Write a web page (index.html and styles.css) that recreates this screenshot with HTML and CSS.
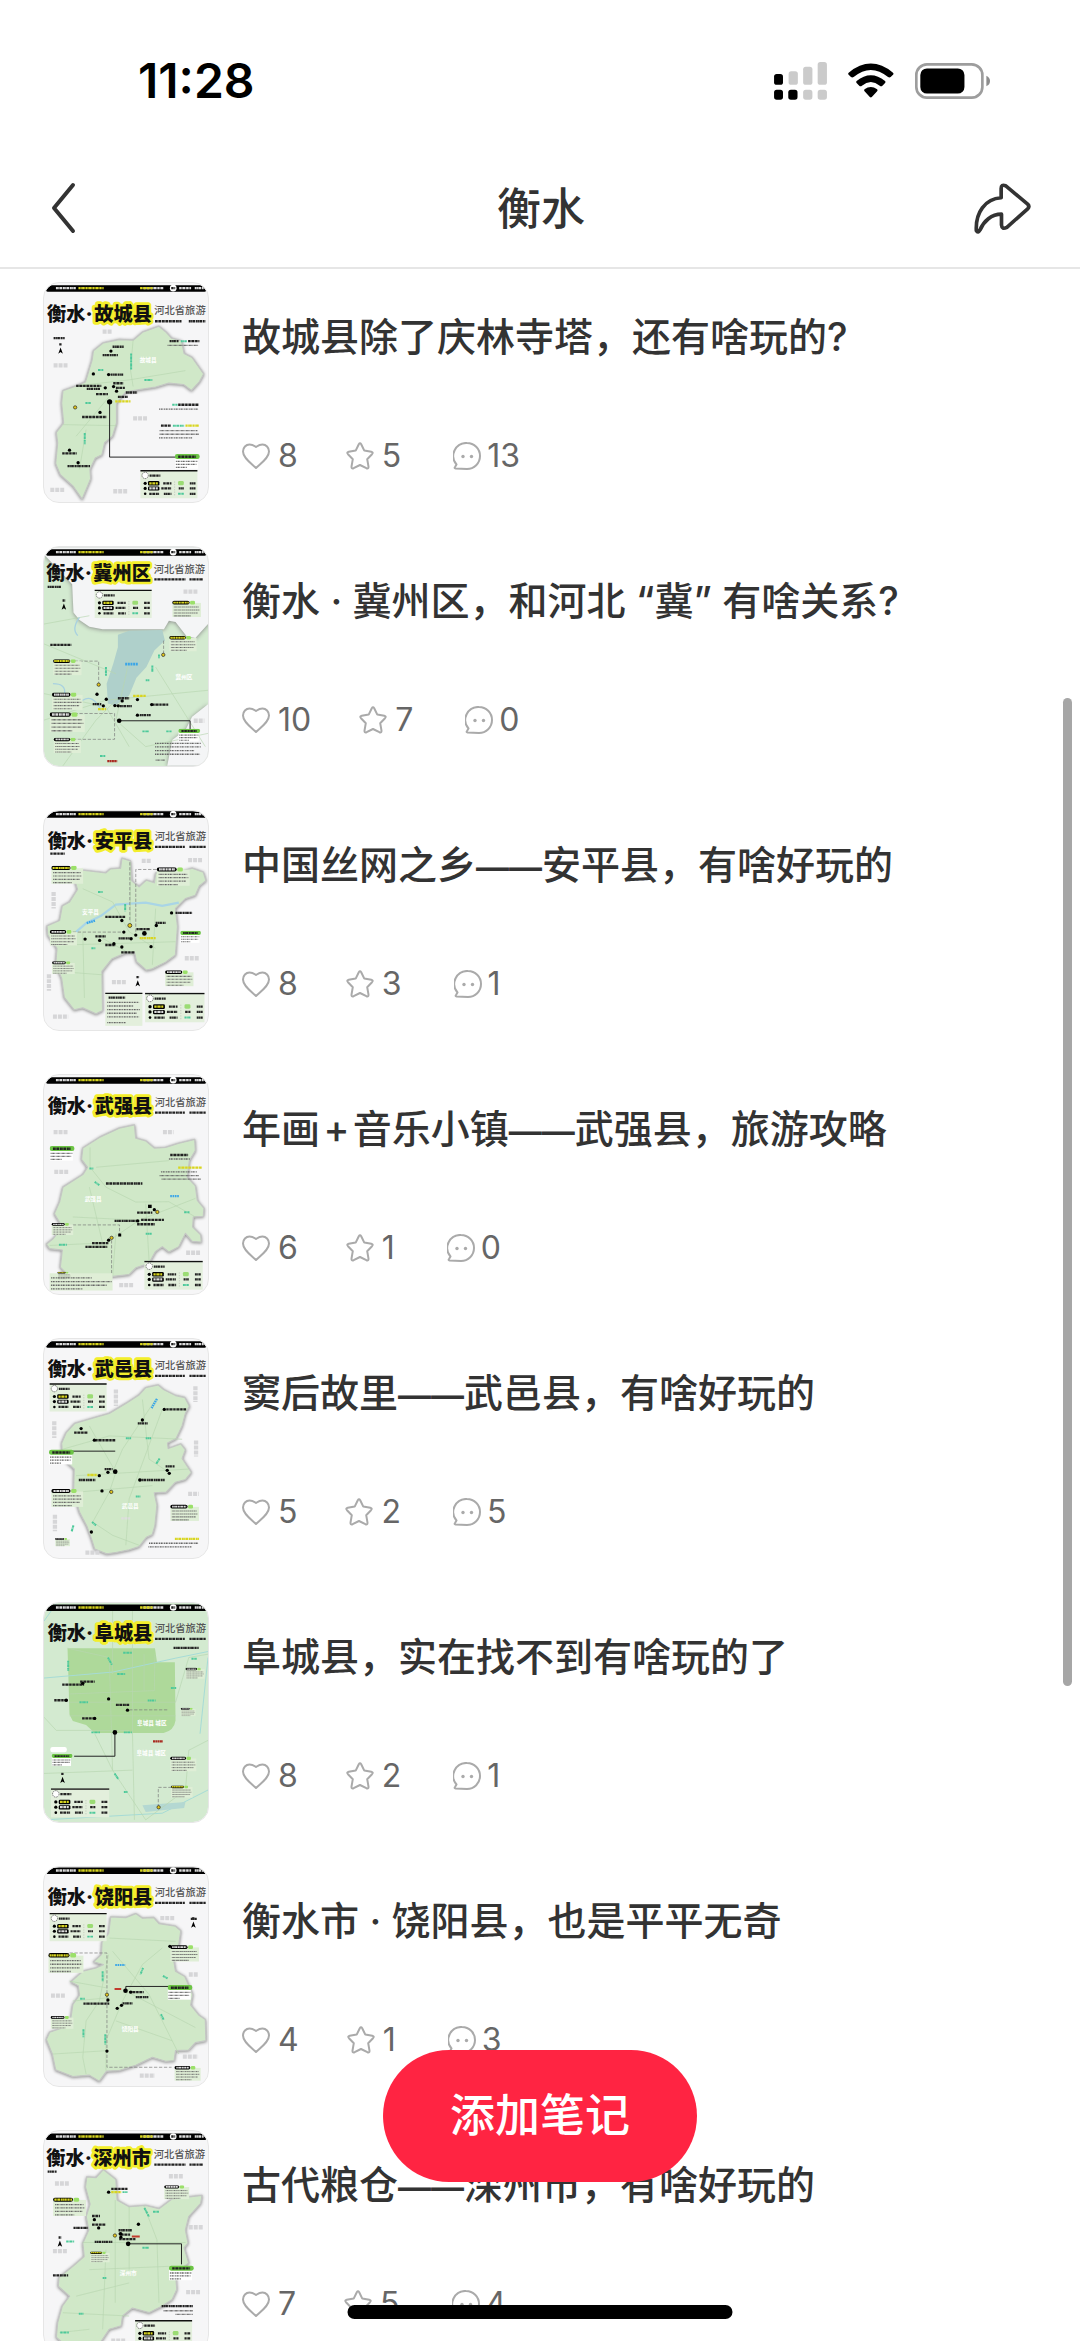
FILE: index.html
```html
<!DOCTYPE html>
<html lang="zh-CN">
<head>
    <meta charset="UTF-8">
    <meta name="viewport" content="width=device-width, initial-scale=1.0">
    <title>衡水</title>
    <link rel="stylesheet" href="styles.css">
</head>
<body>
    <!-- Shared symbols: icons and map pieces -->
    <svg class="sprite" aria-hidden="true">
        <symbol id="heart" viewBox="0 0 28 28">
            <path d="M14 26C9 21 1 16 1 9.500C1 5.500 4 2.500 7.500 2.500C10.500 2.500 12.500 4 14 5C15.500 4 17.500 2.500 20.500 2.500C24 2.500 27 5.500 27 9.500C27 16 19 21 14 26Z"/>
        </symbol>
        <symbol id="star" viewBox="0 0 28 28">
            <path d="M12.800 2.200Q14 .300 15.200 2.200L18.300 8.600L25.300 9.700Q27.700 10.300 26 12.200L21.200 17.200L22.500 24.600Q22.700 27 20.400 26.200L14 23L7.600 26.200Q5.300 27 5.500 24.600L6.800 17.200L2 12.200Q.300 10.300 2.700 9.700L9.700 8.600Z"/>
        </symbol>
        <symbol id="comment" viewBox="0 0 28 28">
            <path d="M14 1A13 13 0 1 1 14 27L2.500 26.500Q1 26.300 2 25L3.500 22.500A13 13 0 0 1 14 1Z"/>
            <circle class="eye" cx="10" cy="14.500" r="1.700"/><circle class="eye" cx="18.500" cy="14.500" r="1.700"/>
        </symbol>

        <symbol id="bar" viewBox="0 0 495 30">
            <rect x="6" y="6" width="484" height="20" rx="5"/>
            <path class="tw" d="M36 15h60M300 15h60M408 15h36M455 15h28"/>
            <path class="ty" d="M104 15h76M290 15h38"/>
            <circle cx="390" cy="15" r="10" fill="#fff"/><path class="tb" d="M384 15h12"/>
        </symbol>
        <symbol id="legend" viewBox="0 0 180 90">
            <rect width="180" height="90" fill="#e3efdc"/>
            <path d="M0 2h180" stroke="#111" stroke-width="5"/>
            <circle cx="15" cy="17" r="10" fill="#fff" stroke="#333" stroke-width="2" stroke-dasharray="4 2"/>
            <path class="tb" d="M29 18h34"/>
            <circle cx="15" cy="42" r="5"/><circle cx="15" cy="58" r="5"/><circle cx="15" cy="75" r="4"/>
            <rect x="24" y="35" width="36" height="14" rx="4"/><rect x="24" y="52" width="36" height="13" rx="4"/>
            <path class="ty" d="M28 42h28"/><path class="tw" d="M28 58h28"/>
            <path class="tb" d="M28 75h32M72 42h26M66 58h32M74 75h24M156 42h18M156 58h18M156 75h18M121 58h16"/>
            <path d="M108 36v46" stroke="#888" stroke-dasharray="4 4"/>
            <rect x="119" y="35" width="18" height="13" rx="4" fill="#9bdc74"/><path class="tg" d="M119 75h18"/>
        </symbol>
        <symbol id="note" viewBox="0 0 110 62">
            <rect y="8" width="106" height="52" fill="#dfeed6"/>
            <rect width="64" height="14" rx="7"/><path class="tw" d="M7 7h52"/>
            <rect x="66" width="18" height="14" rx="5" fill="#9be069"/>
            <path class="ts" d="M6 23h92M6 34h96M6 45h88M6 56h62"/>
        </symbol>
        <symbol id="noteY" viewBox="0 0 110 62">
            <rect y="8" width="106" height="52" fill="#dfeed6"/>
            <rect width="64" height="14" rx="7"/><path class="ty" d="M4 7h57"/>
            <rect x="66" width="18" height="14" rx="5" fill="#9be069"/>
            <path class="ts" d="M6 23h92M6 34h96M6 45h88M6 56h62"/>
        </symbol>
        <symbol id="tag" viewBox="0 0 76 46">
            <rect y="12" width="70" height="32" fill="#fff"/>
            <rect width="75" height="15" rx="7" fill="#6cc445"/><path class="tb" d="M10 8h54"/>
            <path class="ts" d="M3 22h66M3 31h62M3 40h34"/>
        </symbol>
        <symbol id="north" viewBox="0 0 16 34">
            <path class="tb" d="M4 5h8"/><path d="M8 14L15 33L8 28L1 33Z"/>
        </symbol>
    </svg>

    <div class="app">
        <div class="status">
            <span class="time">11:28</span>
            <div class="status-icons">
                <svg class="signal" viewBox="105 63 160 115" aria-hidden="true">
                    <g fill="#cbcbcb">
                        <rect x="149" y="91" width="28" height="41" rx="8"/><rect x="193" y="77" width="28" height="55" rx="8"/><rect x="237" y="63" width="28" height="69" rx="8"/>
                        <rect x="193" y="147" width="28" height="30" rx="8"/><rect x="237" y="147" width="28" height="30" rx="8"/>
                    </g>
                    <rect x="105" y="99" width="27" height="33" rx="8"/><rect x="105" y="147" width="27" height="30" rx="8"/><rect x="148" y="147" width="28" height="30" rx="8"/>
                </svg>
                <svg class="wifi" viewBox="326 67 139 105" aria-hidden="true">
                    <path d="M328 96Q395 41 462 96Q465 99 462 102L455 109Q451 112 447 109Q395 66 343 109Q339 112 335 109L328 102Q325 99 328 96Z"/>
                    <path d="M352 121Q395 86 438 121Q441 124 438 127L430 135Q426 139 422 135Q395 113 368 135Q364 139 360 135L352 127Q349 124 352 121Z"/>
                    <path d="M376 146Q395 132 414 146Q417 149 414 152L398 169Q395 172 392 169L376 152Q373 149 376 146Z"/>
                </svg>
                <svg class="battery" viewBox="525 66 226 108" aria-hidden="true">
                    <rect x="529" y="70" width="199" height="100" rx="32" fill="none" stroke="#9d9d9d" stroke-width="8"/>
                    <rect x="541" y="82" width="133" height="76" rx="20"/>
                    <path d="M740 104Q751 109 751 120T740 136Z" fill="#8d8d8d"/>
                </svg>
            </div>
        </div>

        <header class="nav">
            <button class="nav-btn" type="button" aria-label="返回">
                <svg class="back" viewBox="0 0 26 52"><path d="M23 3L4 26L23 49"/></svg>
            </button>
            <h1>衡水</h1>
            <button class="nav-btn" type="button" aria-label="分享">
                <svg class="share" viewBox="704 426 170 152"><path d="M785 470V442Q785 429 798 434L864 489Q871 496 864 503L802 558Q787 566 786 551V519C756 519 733 540 722 566Q716 577 711 568C708 514 737 473 785 470Z"/></svg>
            </button>
        </header>

        <main class="list">
            <article class="note">
                <svg class="map" viewBox="43 38 495 660" role="img" aria-label="故城县地图">
                    <path class="county" d="M390 168L412 186L428 204L458 212L466 250L490 262L525 312L512 336L488 362L464 344L420 340L380 352L340 358L290 366L262 400L262 460L250 500L226 520L218 556L198 566L182 600L184 628L158 690L130 650L92 616L78 582L84 520L80 488L102 460L96 400L100 362L140 348L168 336L188 270L192 242L222 218L270 208L312 210L340 186Z"/>
                    <path class="road" d="M312 210L304 300L312 350M140 348L300 330L470 302M100 465L262 468M140 500L240 380M170 480L150 600"/>
                    <text class="where" x="332" y="276">故城县</text>
                    <path class="tg" d="M306 250v50M346 330h24M168 400h16M166 490v34M206 300h16"/>
                    <path class="away" d="M220 184h30M72 286h44M312 446h42M62 662h42M252 666h44"/>
                    <path class="leader" d="M241 396V563H440"/>
                    <path class="tb" d="M250 230h34M220 255h46M244 314h38M140 348h76M172 357h40M200 373h36M252 340h30M260 354h28M290 368h34M266 381h30M158 442h74M98 552h44M114 590h68M72 204h34"/>
                    <path class="ty" d="M258 395h46"/>
                    <circle cx="245" cy="243" r="5"/><circle cx="192" cy="312" r="5"/><circle cx="238" cy="314" r="5"/><circle cx="228" cy="354" r="5"/><circle cx="253" cy="350" r="5"/><circle cx="262" cy="364" r="5"/><circle cx="241" cy="396" r="8"/><circle cx="212" cy="428" r="5"/><circle cx="120" cy="542" r="5"/><circle cx="146" cy="580" r="5"/>
                    <circle class="gold" cx="137" cy="413" r="5"/>
                    <use href="#north" x="85" y="218" width="16" height="34"/>
                    <path class="tb" d="M422 213h28M478 213h34M448 405h62M396 468h30"/><path class="tg" d="M456 213h18M430 405h16M432 468h34"/><path class="ty" d="M470 468h40"/>
                    <path class="ts" d="M416 226h92M390 418h118M392 483h114M392 494h118M390 505h100"/>
                    <use href="#tag" x="438" y="554" width="76" height="46"/>
                    <use href="#legend" x="330" y="602" width="180" height="86"/>
                    <use href="#bar" x="43" y="38" width="495" height="30"/>
                    <text class="city" x="52" y="152">衡水<tspan class="dot">·</tspan></text><text class="hot" x="195" y="152">故城县</text><text class="sub" x="376" y="131">河北省旅游</text>
                    <path class="tb" d="M378 153h80M480 153h50"/>
                </svg>
                <div class="note-body">
                    <h2>故城县除了庆林寺塔，还有啥玩的?</h2>
                    <div class="stats">
                        <span class="stat"><svg><use href="#heart"/></svg>8</span>
                        <span class="stat"><svg><use href="#star"/></svg>5</span>
                        <span class="stat"><svg><use href="#comment"/></svg>13</span>
                    </div>
                </div>
            </article>

            <article class="note">
                <svg class="map green" viewBox="43 38 495 660" role="img" aria-label="冀州区地图">
                    <path class="outside" d="M43 38H538V270L500 312L474 308L440 264L420 260L405 286L220 286L180 278L150 258L132 235L128 150L43 60Z"/>
                    <path class="outside" d="M538 512L490 550L470 590L430 620L415 698H538Z"/>
                    <path d="M266 302L300 290L400 288L408 320L376 350L352 400L322 432L300 486L258 516L236 510L232 450L252 390L266 340Z" fill="#afd0cb"/>
                    <path class="road" d="M43 270L180 245M43 330L260 420M43 560L230 500L538 470M100 698L200 560L270 490M260 560L350 640L538 600M300 380L260 560M380 400L530 640M43 480L230 520L300 640"/>
                    <path d="M150 250Q125 285 145 305M70 450Q110 450 105 480T160 500Q190 480 215 530" stroke="#a8d1e0" stroke-width="4" fill="none"/>
                    <text class="where" x="440" y="436">冀州区</text>
                    <path d="M288 391h38" stroke="#3aa5e8" stroke-width="9" stroke-dasharray="6 2"/>
                    <path class="tg" d="M230 400v26M370 395v20M350 440h12M390 362v12M340 594h20M412 594h16M212 668h16"/>
                    <path class="away" d="M464 172h44M495 562h32"/>
                    <path class="dash" d="M135 382H208V455M120 540H256V618H115M404 320V360"/>
                    <path class="leader" d="M270 562H484V588"/>
                    <path class="tb" d="M62 333h64M266 494h34M190 512h26M272 518h36M370 513h48M332 545h34M54 158h40M210 182h46"/>
                    <path class="ty" d="M312 487h38M206 527h24"/><path d="M234 684h30" stroke="#a92a20" stroke-width="7" stroke-dasharray="6 1"/>
                    <circle cx="203" cy="482" r="5"/><circle cx="231" cy="497" r="5"/><circle cx="222" cy="517" r="5"/><circle cx="257" cy="516" r="5"/><circle cx="267" cy="517" r="5"/><circle cx="279" cy="502" r="5"/><circle cx="325" cy="498" r="5"/><circle cx="368" cy="513" r="5"/><circle cx="325" cy="545" r="5"/><circle cx="270" cy="562" r="7"/>
                    <circle class="gold" cx="208" cy="453" r="5"/><circle class="gold" cx="403" cy="363" r="5"/>
                    <use href="#north" x="95" y="194" width="16" height="34"/>
                    <use href="#noteY" x="60" y="376" width="110" height="50"/><use href="#note" x="60" y="477" width="110" height="54"/><use href="#note" x="60" y="536" width="110" height="62"/><use href="#note" x="60" y="613" width="110" height="48"/>
                    <use href="#noteY" x="430" y="198" width="90" height="54"/><use href="#noteY" x="416" y="306" width="96" height="48"/>
                    <use href="#tag" x="444" y="586" width="76" height="40"/>
                    <path class="ts" d="M378 630h140M378 641h140M378 652h120M378 663h136M380 681h30"/>
                    <use href="#legend" x="192" y="166" width="180" height="86"/>
                    <use href="#bar" x="43" y="38" width="495" height="30"/>
                    <text class="city" x="50" y="136">衡水<tspan class="dot">·</tspan></text><text class="hot" x="192" y="136">冀州区</text><text class="sub" x="374" y="115">河北省旅游</text>
                    <path class="tb" d="M376 135h94M482 135h40"/>
                </svg>
                <div class="note-body">
                    <h2>衡水 · 冀州区，和河北 “冀” 有啥关系?</h2>
                    <div class="stats">
                        <span class="stat"><svg><use href="#heart"/></svg>10</span>
                        <span class="stat"><svg><use href="#star"/></svg>7</span>
                        <span class="stat"><svg><use href="#comment"/></svg>0</span>
                    </div>
                </div>
            </article>

            <article class="note">
                <svg class="map" viewBox="43 36 495 660" role="img" aria-label="安平县地图">
                    <path class="county" d="M278 178L304 186L308 246L330 264L352 244L376 252L380 222L440 224L490 208L524 220L532 246L512 262L500 290L470 300L440 330L446 384L440 470L410 492L370 512L352 516L322 490L316 462L290 464L248 482L218 520L220 638L200 648L160 630L134 636L104 598L96 540L78 500L82 450L54 410L52 382L90 366L98 322L120 310L144 272L136 246L160 214L230 222L244 210L274 208Z"/>
                    <path d="M140 400L170 374L215 352L260 318L350 312L400 322L450 312" stroke="#a9d5e6" stroke-width="7" fill="none"/>
                    <path class="road" d="M160 270L250 310L300 400L380 450M304 190V390M100 440L440 430M160 400L165 600M220 420L310 470M380 330L370 500M90 520L220 530"/>
                    <text class="where" x="158" y="347">安平县</text>
                    <path class="tg" d="M206 280h14M288 316v22M186 450h12"/><path d="M172 374l26 -8" stroke="#3aa5e8" stroke-width="7" stroke-dasharray="5 2"/>
                    <path class="away" d="M338 186h30M478 184h44M72 280v50M468 480h44M248 552h44M70 656h46M58 528v50"/>
                    <path class="dash" d="M130 401H284M320 400V212H384M302 190V370"/>
                    <path class="tb" d="M228 355h60M440 343h50M380 373h30M322 392h40M198 414h32M268 420h34M228 440h30M276 462h40M62 164h44"/>
                    <path class="ty" d="M332 419h48"/>
                    <circle cx="278" cy="366" r="5"/><circle cx="428" cy="343" r="5"/><circle cx="382" cy="381" r="5"/><circle cx="167" cy="422" r="5"/><circle cx="211" cy="426" r="5"/><circle cx="254" cy="436" r="5"/><circle cx="278" cy="446" r="5"/><circle cx="284" cy="401" r="5"/><circle cx="320" cy="410" r="5"/><circle cx="346" cy="405" r="7"/><circle cx="366" cy="445" r="5"/><circle cx="306" cy="421" r="5"/>
                    <circle class="gold" cx="302" cy="381" r="6"/>
                    <use href="#noteY" x="60" y="201" width="110" height="56"/><use href="#note" x="60" y="395" width="86" height="48"/><use href="#note" x="60" y="489" width="86" height="40"/>
                    <use href="#note" x="380" y="205" width="110" height="58"/><use href="#note" x="380" y="516" width="146" height="50"/>
                    <use href="#tag" x="448" y="397" width="76" height="38"/>
                    <use href="#north" x="318" y="532" width="16" height="34"/>
                    <rect x="228" y="584" width="112" height="100" fill="#e3efdc"/><path d="M228 586h112" stroke="#111" stroke-width="4"/>
                    <path class="tb" d="M238 599h50"/><path class="ts" d="M234 613h96M234 624h80M234 635h98M234 646h90M234 657h96M234 674h56"/>
                    <use href="#legend" x="348" y="584" width="180" height="90"/>
                    <use href="#bar" x="43" y="30" width="495" height="30"/>
                    <text class="city" x="54" y="146">衡水<tspan class="dot">·</tspan></text><text class="hot" x="196" y="146">安平县</text><text class="sub" x="377" y="124">河北省旅游</text>
                    <path class="tb" d="M378 144h90M482 144h50"/>
                </svg>
                <div class="note-body">
                    <h2>中国丝网之乡<span class="em">——</span>安平县，有啥好玩的</h2>
                    <div class="stats">
                        <span class="stat"><svg><use href="#heart"/></svg>8</span>
                        <span class="stat"><svg><use href="#star"/></svg>3</span>
                        <span class="stat"><svg><use href="#comment"/></svg>1</span>
                    </div>
                </div>
            </article>

            <article class="note">
                <svg class="map" viewBox="43 42 495 660" role="img" aria-label="武强县地图">
                    <path class="county" d="M270 202L316 192L320 232L350 240L376 262L410 260L448 248L498 236L500 270L482 300L476 350L500 376L506 420L526 444L524 468L494 470L492 500L516 524L518 546L490 544L470 520L450 560L420 576L400 560L380 574L360 610L320 624L300 644L230 652L180 664L110 640L92 622L98 570L60 566L50 552L70 536L98 500L74 460L90 424L100 380L160 342L174 320L156 296L160 262L210 230Z"/>
                    <path class="road" d="M182 260V320L230 380L320 425L420 424L500 470M60 556L230 548L330 480L500 414M180 380L220 550M260 520L250 650M350 430L360 600M200 320L420 300M130 470L330 480"/>
                    <text class="where" x="166" y="422">武强县</text>
                    <path class="tg" d="M196 364l14 10M88 554h24M466 456h16M350 521h18M180 324h12"/><path d="M424 407h28" stroke="#3aa5e8" stroke-width="7" stroke-dasharray="5 2"/>
                    <path class="away" d="M72 214h44M402 214h32M74 334h44M472 578h42M270 676h42"/>
                    <path class="dash" d="M130 494H271V522M247 540V650"/>
                    <path class="tb" d="M230 369h110M424 283h54M324 457h46M256 482h70M336 479h70M324 492h54M188 549h50M168 560h66"/>
                    <circle cx="376" cy="448" r="5"/><rect x="357" y="433" width="11" height="10"/><rect x="267" y="520" width="9" height="9"/><circle cx="238" cy="540" r="5"/><circle cx="326" cy="482" r="5"/><circle class="gold" cx="385" cy="455" r="5"/><circle class="gold" cx="247" cy="533" r="5"/>
                    <use href="#tag" x="60" y="252" width="76" height="54"/>
                    <path class="ty" d="M448 321h72"/><path class="ts" d="M396 334h110M392 345h120M398 356h120M420 295h64"/>
                    <use href="#note" x="60" y="488" width="80" height="38"/>
                    <rect x="60" y="640" width="190" height="52" fill="#dfeed6"/><use href="#noteY" x="60" y="635" width="90" height="24"/><path class="ts" d="M64 654h124M64 665h184M64 676h170M64 687h96"/>
                    <use href="#legend" x="344" y="602" width="180" height="88"/>
                    <use href="#bar" x="43" y="42" width="495" height="30"/>
                    <text class="city" x="54" y="156">衡水<tspan class="dot">·</tspan></text><text class="hot" x="196" y="156">武强县</text><text class="sub" x="377" y="136">河北省旅游</text>
                    <path class="tb" d="M378 155h90M482 155h50"/>
                </svg>
                <div class="note-body">
                    <h2>年画&hairsp;+&hairsp;音乐小镇<span class="em">——</span>武强县，旅游攻略</h2>
                    <div class="stats">
                        <span class="stat"><svg><use href="#heart"/></svg>6</span>
                        <span class="stat"><svg><use href="#star"/></svg>1</span>
                        <span class="stat"><svg><use href="#comment"/></svg>0</span>
                    </div>
                </div>
            </article>

            <article class="note">
                <svg class="map" viewBox="43 38 495 660" role="img" aria-label="武邑县地图">
                    <path class="county" d="M388 176L404 190L440 208L468 214L482 240L470 262L460 300L442 338L416 352L418 368L456 354L470 372L460 398L488 440L470 462L440 470L412 500L376 502L384 540L378 600L370 628L352 636L330 664L300 674L260 682L232 686L196 672L186 640L172 602L150 560L132 500L134 430L100 400L96 352L110 320L136 292L190 276L240 262L290 232L330 206L350 184Z"/>
                    <path class="road" d="M180 300L260 440L240 500L190 590M380 220L280 370L250 440M140 450L480 430M140 500L370 480M190 590L250 630L330 660M400 250L300 520L290 660M100 370L240 330L460 340M340 220L360 400L420 440"/>
                    <text class="where" x="278" y="548">武邑县</text><path class="tw" d="M276 579h28"/>
                    <path d="M384 218l-16 28" stroke="#3aa5e8" stroke-width="7" stroke-dasharray="5 2"/>
                    <path class="tg" d="M290 337h16M350 337h16M392 398l-10 16M188 590l12 10M320 513h14M132 600l-6 20"/>
                    <path class="away" d="M260 190v50M500 180v48M74 286v50M502 344v48M478 505h32M76 568v50M168 682h44"/>
                    <path class="leader" d="M130 376H258"/>
                    <path class="tb" d="M412 250h60M326 292h30M134 320h40M198 343h60M226 430h24M148 463h50M332 463h76M410 422h28"/><path class="ty" d="M174 448h30"/>
                    <circle cx="406" cy="250" r="5"/><circle cx="340" cy="282" r="5"/><circle cx="155" cy="308" r="5"/><circle cx="195" cy="343" r="5"/><circle cx="236" cy="440" r="5"/><circle cx="258" cy="438" r="7"/><circle cx="210" cy="450" r="5"/><circle cx="332" cy="463" r="5"/><circle cx="415" cy="434" r="5"/><circle cx="421" cy="443" r="5"/><circle cx="218" cy="496" r="5"/><circle cx="186" cy="620" r="5"/><circle class="gold" cx="246" cy="499" r="5"/>
                    <use href="#tag" x="58" y="369" width="76" height="52"/>
                    <use href="#note" x="60" y="490" width="110" height="56"/><use href="#note" x="60" y="638" width="80" height="26"/>
                    <use href="#note" x="424" y="532" width="90" height="62"/>
                    <path class="ty" d="M438 641h74"/><path class="ts" d="M360 654h150M358 665h130"/>
                    <use href="#legend" x="56" y="171" width="180" height="86"/>
                    <use href="#bar" x="43" y="38" width="495" height="30"/>
                    <text class="city" x="54" y="149">衡水<tspan class="dot">·</tspan></text><text class="hot" x="196" y="149">武邑县</text><text class="sub" x="377" y="129">河北省旅游</text>
                    <path class="tb" d="M378 149h90M482 149h50"/>
                </svg>
                <div class="note-body">
                    <h2>窦后故里<span class="em">——</span>武邑县，有啥好玩的</h2>
                    <div class="stats">
                        <span class="stat"><svg><use href="#heart"/></svg>5</span>
                        <span class="stat"><svg><use href="#star"/></svg>2</span>
                        <span class="stat"><svg><use href="#comment"/></svg>5</span>
                    </div>
                </div>
            </article>

            <article class="note">
                <svg class="map green" viewBox="43 36 495 660" role="img" aria-label="阜城县地图">
                    <path d="M114 172H378L384 214H438L440 390Q436 420 404 428H196L170 404L130 392L120 372Z" fill="#aed99a"/>
                    <path d="M43 262L250 244L440 202L538 182M538 200L514 430M43 690L400 670L538 600M43 90L80 38" stroke="#a5dbd6" stroke-width="3" fill="none"/>
                    <path d="M340 646L470 636L466 654L350 666Z" fill="#b4d8d2"/>
                    <path class="road" d="M114 172L240 200L250 540L350 690M43 380L80 420H300M310 60V428L316 690M120 335H440L480 200L538 190M120 310L376 300L378 190M196 430L250 540M43 550L310 540M345 190V300M120 376H440M538 450L480 480L470 600L350 690M250 250V60"/>
                    <text class="where" x="324" y="403">阜城县 城区</text><text class="where" x="322" y="494">阜城县 城区</text>
                    <path class="tg" d="M282 186h26M116 210v30M236 200l12 22M264 250h24M150 335h26M356 330h24M426 292h16M186 426h26M284 426h24M256 550l12 18M488 204h16M284 606h12"/>
                    <path class="leader" d="M257 426V498H134"/>
                    <path class="tb" d="M152 273h44M98 282h66M74 329h40M158 384h42M260 343h40M434 171h76"/><path d="M372 453h30" stroke="#a92a20" stroke-width="7" stroke-dasharray="6 1"/>
                    <path class="dash" d="M388 652V592H440M300 358H420"/>
                    <circle cx="238" cy="325" r="5"/><circle cx="295" cy="359" r="5"/><circle cx="257" cy="426" r="7"/><circle cx="110" cy="329" r="5"/><circle cx="196" cy="384" r="5"/><circle cx="160" cy="278" r="5"/><circle class="gold" cx="389" cy="652" r="5"/>
                    <use href="#note" x="470" y="230" width="60" height="36"/><use href="#note" x="436" y="352" width="86" height="26"/><use href="#note" x="410" y="499" width="110" height="46"/><use href="#noteY" x="410" y="586" width="100" height="38"/>
                    <rect x="62" y="470" width="50" height="16" rx="7" fill="#fff"/><use href="#tag" x="60" y="491" width="76" height="38"/>
                    <use href="#north" x="91" y="546" width="16" height="34"/>
                    <use href="#legend" x="62" y="595" width="180" height="88"/>
                    <use href="#bar" x="43" y="34" width="495" height="30"/>
                    <text class="city" x="54" y="146">衡水<tspan class="dot">·</tspan></text><text class="hot" x="196" y="146">阜城县</text><text class="sub" x="377" y="124">河北省旅游</text>
                    <path class="tb" d="M378 144h90M482 144h50"/>
                </svg>
                <div class="note-body">
                    <h2>阜城县，实在找不到有啥玩的了</h2>
                    <div class="stats">
                        <span class="stat"><svg><use href="#heart"/></svg>8</span>
                        <span class="stat"><svg><use href="#star"/></svg>2</span>
                        <span class="stat"><svg><use href="#comment"/></svg>1</span>
                    </div>
                </div>
            </article>

            <article class="note">
                <svg class="map" viewBox="43 36 495 660" role="img" aria-label="饶阳县地图">
                    <path class="county" d="M244 186L290 188L320 176L340 190L374 188L390 206L440 214L456 228L450 270L432 300L440 350L468 366L492 420L486 452L510 482L530 496L532 560L500 566L480 588L440 590L436 620L410 622L370 610L320 634L270 650L232 652L210 682L180 664L130 668L78 648L68 600L50 556L60 534L100 520L124 490L130 450L150 422L146 394L124 382L160 350L200 340L222 330L192 322L216 300L218 262L238 236Z"/>
                    <path class="road" d="M238 300L210 440L170 500L160 610L170 660M250 290L360 420L450 600M70 600L230 590M400 280L340 330L280 440L230 560V650M130 440L240 430M120 380L230 400M240 250L440 260M290 410L500 520M260 500L430 560"/>
                    <text class="where" x="278" y="532">饶阳县</text>
                    <path d="M258 331h30" stroke="#3aa5e8" stroke-width="6" stroke-dasharray="5 2"/>
                    <path class="tg" d="M220 350v30M342 340l-8 20M402 364l14 8M396 480l8 16M162 525v24M228 540v32M152 433h14"/>
                    <path class="away" d="M394 190h44M64 424h44M462 608h46M332 665h46M480 360h28"/>
                    <path class="dash" d="M120 295H233V640H428"/>
                    <path class="leader" d="M290 408V396H418"/>
                    <path class="tb" d="M162 448h78M300 413h44M320 428h38M280 447h30M486 192h18"/><path d="M256 404h20" stroke="#c23b2e" stroke-width="6"/>
                    <circle cx="236" cy="437" r="5"/><circle cx="289" cy="409" r="7"/><circle cx="305" cy="413" r="5"/><circle cx="277" cy="453" r="5"/><circle cx="264" cy="462" r="5"/><circle cx="233" cy="591" r="5"/><circle cx="423" cy="275" r="5"/><circle class="gold" cx="233" cy="421" r="5"/>
                    <use href="#north" x="486" y="186" width="16" height="34"/>
                    <use href="#noteY" x="56" y="288" width="110" height="76"/><use href="#note" x="56" y="485" width="86" height="40"/>
                    <use href="#note" x="424" y="270" width="90" height="54"/><use href="#note" x="428" y="636" width="100" height="46"/>
                    <use href="#tag" x="416" y="388" width="76" height="54"/>
                    <use href="#legend" x="56" y="174" width="180" height="86"/>
                    <use href="#bar" x="43" y="31" width="495" height="30"/>
                    <text class="city" x="54" y="146">衡水<tspan class="dot">·</tspan></text><text class="hot" x="196" y="146">饶阳县</text><text class="sub" x="377" y="124">河北省旅游</text>
                    <path class="tb" d="M378 144h90M482 144h50"/>
                </svg>
                <div class="note-body">
                    <h2>衡水市 · 饶阳县，也是平平无奇</h2>
                    <div class="stats">
                        <span class="stat"><svg><use href="#heart"/></svg>4</span>
                        <span class="stat"><svg><use href="#star"/></svg>1</span>
                        <span class="stat"><svg><use href="#comment"/></svg>3</span>
                    </div>
                </div>
            </article>

            <article class="note">
                <svg class="map" viewBox="43 42 495 660" role="img" aria-label="深州市地图">
                    <path class="county" d="M222 158L260 188L264 250L300 270L350 266L390 276L430 246L520 236L516 260L480 300L470 340L478 380L466 394L480 440L440 470L444 520L430 550L400 570L360 590L310 576L280 600L276 630L240 640L200 700H120L80 664L84 620L98 570L120 540L86 510L88 484L130 450L164 420L160 380L178 340L170 300L182 262L168 210L172 180L200 182Z"/>
                    <path class="road" d="M344 266L384 370L390 560M258 250V560M160 378H470M230 400L220 640M100 590L300 600M180 460L420 450M140 540L300 500M300 270V460M90 650L180 640"/>
                    <text class="where" x="272" y="476">深州市</text>
                    <path class="tg" d="M346 274l14 26M372 285h18M110 375h24M340 394h20M220 485h12M92 650h26M148 593h14"/>
                    <path class="away" d="M76 200h44M420 178h42M480 332h42M70 404h44M472 528h42M246 674h42"/>
                    <path class="leader" d="M297 382H458V444"/>
                    <path class="tb" d="M188 298h24M188 324h40M132 334h44M268 341h40M276 354h28M196 376h54M270 368h50M70 477h46M54 164h28M398 570h94"/><path d="M308 360h24" stroke="#c23b2e" stroke-width="6"/>
                    <circle cx="195" cy="309" r="5"/><circle cx="208" cy="334" r="5"/><circle cx="328" cy="323" r="5"/><circle cx="274" cy="352" r="6"/><circle cx="275" cy="362" r="5"/><circle cx="297" cy="382" r="7"/><circle cx="238" cy="226" r="5"/><circle class="gold" cx="257" cy="357" r="5"/>
                    <path class="ty" d="M246 226h30"/><path class="tg" d="M280 226h15"/><path class="tb" d="M246 216h50"/>
                    <use href="#noteY" x="60" y="242" width="124" height="58"/><use href="#noteY" x="160" y="405" width="106" height="34"/>
                    <use href="#note" x="390" y="205" width="110" height="44"/><path class="ts" d="M404 584h88M440 595h52"/>
                    <use href="#tag" x="420" y="444" width="76" height="54"/>
                    <use href="#north" x="83" y="358" width="16" height="34"/>
                    <use href="#legend" x="314" y="612" width="180" height="86"/>
                    <use href="#bar" x="43" y="43" width="495" height="30"/>
                    <text class="city" x="50" y="144">衡水<tspan class="dot">·</tspan></text><text class="hot" x="192" y="144">深州市</text><text class="sub" x="374" y="123">河北省旅游</text>
                    <path class="tb" d="M376 143h94M482 143h40"/>
                </svg>
                <div class="note-body">
                    <h2>古代粮仓<span class="em">——</span>深州市，有啥好玩的</h2>
                    <div class="stats">
                        <span class="stat"><svg><use href="#heart"/></svg>7</span>
                        <span class="stat"><svg><use href="#star"/></svg>5</span>
                        <span class="stat"><svg><use href="#comment"/></svg>4</span>
                    </div>
                </div>
            </article>
        </main>

        <div class="scrollbar"></div>
        <button class="add" type="button">添加笔记</button>
        <div class="home"></div>
    </div>
</body>
</html>
```
FILE: styles.css
```css
* {
    box-sizing: border-box;
}

body {
    margin: 0;
    background-color: #fff;
    color: #333;
    font-family: Inter, "Noto Sans CJK SC", sans-serif;
}

button {
    border: none;
    background: none;
    padding: 0;
    font-family: inherit;
    cursor: pointer;
}

.sprite {
    position: absolute;
    width: 0;
    height: 0;
}

.app {
    position: relative;
    height: 100vh;
    overflow: hidden;
    display: flex;
    flex-direction: column;
}

/* Status bar */
.status {
    flex: none;
    height: 149px;
    padding: 12px 90px 0 138px;
    display: flex;
    align-items: center;
    justify-content: space-between;
    color: #000;
}

.time {
    font-size: 48px;
    font-weight: 600;
}

.status-icons {
    display: flex;
    align-items: center;
    gap: 21px;
}

.signal {
    width: 53px;
    height: 38px;
}

.wifi {
    width: 46px;
    height: 35px;
}

.battery {
    width: 75px;
    height: 36px;
}

/* Title bar */
.nav {
    flex: none;
    height: 120px;
    padding: 0 48px 0 50px;
    display: flex;
    align-items: center;
    justify-content: space-between;
    border-bottom: 2px solid #e6e6e6;
}

.nav h1 {
    margin: 0;
    padding-bottom: 4px;
    font-size: 44px;
    font-weight: 500;
}

.nav-btn {
    width: 58px;
    height: 58px;
    display: flex;
    align-items: center;
}

.nav-btn svg {
    fill: none;
    stroke: #333;
    stroke-linecap: round;
    stroke-linejoin: round;
}

.back {
    width: 26px;
    height: 52px;
    stroke-width: 4;
}

.share {
    width: 57px;
    height: 51px;
    stroke-width: 11;
}

/* Notes */
.list {
    flex: 1;
    min-height: 0;
    overflow: hidden;
    padding: 14px 44px 0;
}

.note {
    display: flex;
    gap: 34px;
    margin-bottom: 45px;
}

.map {
    flex: none;
    width: 164px;
    height: 219px;
    border-radius: 15px;
    background-color: #f6f6f7;
    outline: 1px solid #e6e6e6;
}

.map.green {
    background-color: #d3ead0;
}

.note-body {
    flex: 1;
    padding-top: 24px;
}

.note h2 {
    margin: 0 0 69px;
    font-size: 39px;
    font-weight: 500;
    line-height: 60px;
    white-space: nowrap;
}

/* Dash between the two halves of a title, a bit shorter than two characters */
.em {
    font-size: 33px;
    font-weight: 600;
    line-height: 1;
}

.stats {
    display: flex;
    gap: 48px;
    color: #666;
    font-size: 32px;
    line-height: 40px;
}

.stat {
    display: flex;
    align-items: center;
    gap: 8px;
}

.stat:last-child {
    margin-left: 4px;
    gap: 6px;
}

.stat svg {
    width: 28px;
    height: 28px;
    fill: none;
    stroke: #aaa;
    stroke-width: 2;
    stroke-linejoin: round;
}

.eye {
    fill: #aaa;
    stroke: none;
}

/* Map drawing */
.county {
    fill: #d0e8c8;
    stroke: #c4c6c4;
    stroke-width: 4;
    stroke-linejoin: round;
    filter: drop-shadow(0 2px 5px #888);
}

.outside {
    fill: #f4f5f6;
    filter: drop-shadow(0 2px 6px #888);
}

.road {
    fill: none;
    stroke: #b7d6b0;
    stroke-width: 2;
}

.leader {
    fill: none;
    stroke: #222;
    stroke-width: 3;
}

.dash {
    fill: none;
    stroke: #777;
    stroke-width: 2;
    stroke-dasharray: 10 5;
}

.gold {
    fill: #e2c51c;
    stroke: #222;
    stroke-width: 2;
}

.tb, .tw, .ty, .tg, .ts, .away {
    fill: none;
    stroke-width: 7;
    stroke-dasharray: 6 1 3 1 8 2;
}

.tb {
    stroke: #222;
}

.tw {
    stroke: #ddd;
}

.ty {
    stroke: #d8d51f;
}

.tg {
    stroke: #4cc99a;
    stroke-width: 6;
}

.ts {
    stroke: #666;
    stroke-width: 4;
    stroke-dasharray: 3 2 5 1 2 2;
}

.away {
    stroke: #d6d6d8;
    stroke-width: 13;
    stroke-dasharray: 12 3;
}

.city, .hot {
    font-size: 58px;
    font-weight: 900;
    font-family: "Noto Sans CJK SC", sans-serif;
    fill: #111;
}

.dot {
    font-family: Inter, sans-serif;
}

.hot {
    stroke: #f3ee2c;
    stroke-width: 16;
    stroke-linejoin: round;
    paint-order: stroke;
}

.sub {
    font-size: 31px;
    font-weight: 500;
    fill: #555;
}

.where {
    font-size: 17px;
    font-weight: 700;
    fill: #fff;
}

/* Things that float over the list */
.scrollbar {
    position: absolute;
    top: 698px;
    right: 8px;
    width: 9px;
    height: 988px;
    border-radius: 5px;
    background-color: #a6a6a6;
}

.add {
    position: absolute;
    left: 50%;
    bottom: 159px;
    transform: translateX(-50%);
    padding: 0 67px;
    line-height: 132px;
    border-radius: 66px;
    background-color: #ff2442;
    color: #fff;
    font-size: 45px;
    font-weight: 500;
    white-space: nowrap;
}

.home {
    position: absolute;
    left: 50%;
    bottom: 22px;
    transform: translateX(-50%);
    width: 385px;
    height: 14px;
    border-radius: 7px;
    background-color: #000;
}
```
